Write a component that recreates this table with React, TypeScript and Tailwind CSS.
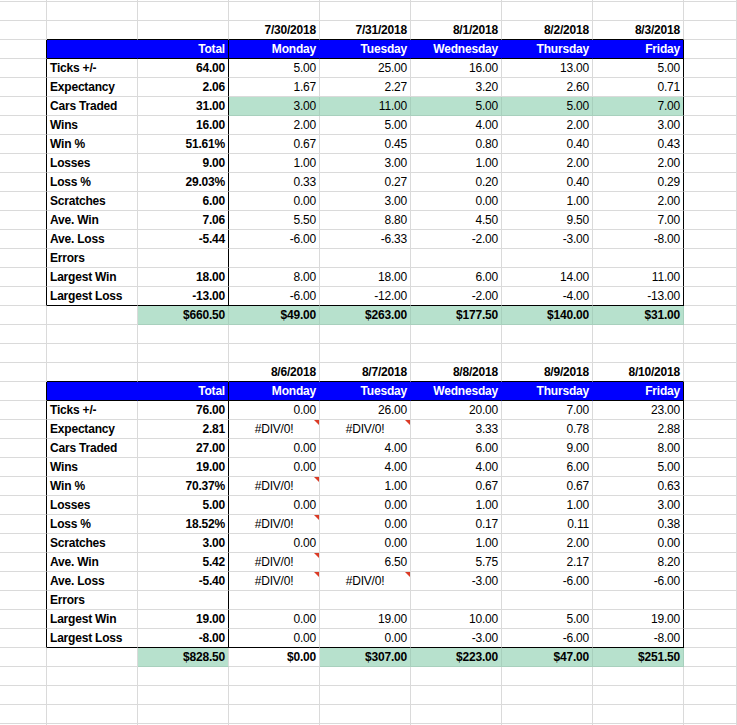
import React from "react";

type Line = "gray" | "black" | "blue" | "green";
type Fill = "none" | "blue" | "green";

const rightLine: Record<Line, string> = {
  gray: "border-r-[#dadada]",
  black: "border-r-black",
  blue: "border-r-[#0000ff]",
  green: "border-r-[#a8d0bd]",
};

const bottomLine: Record<Line, string> = {
  gray: "border-b-[#dadada]",
  black: "border-b-black",
  blue: "border-b-[#0000ff]",
  green: "border-b-[#a8d0bd]",
};

const fills: Record<Fill, string> = {
  none: "bg-white text-black",
  blue: "bg-[#0000ff] text-white",
  green: "bg-[#b7e1cd] text-black",
};

type CellProps = {
  text?: string;
  align?: "left" | "right" | "center";
  bold?: boolean;
  fill?: Fill;
  r?: Line;
  b?: Line;
  error?: boolean;
};

function Cell({
  text = "",
  align = "right",
  bold = false,
  fill = "none",
  r = "gray",
  b = "gray",
  error = false,
}: CellProps) {
  const alignCls =
    align === "left" ? "text-left" : align === "center" ? "text-center" : "text-right";
  return (
    <div
      className={`relative box-border h-full overflow-hidden whitespace-nowrap border-r border-b px-[3px] text-[12px] leading-[19px] tracking-[-0.2px] ${alignCls} ${
        bold ? "font-bold" : "font-normal"
      } ${fills[fill]} ${rightLine[r]} ${bottomLine[b]}`}
    >
      {text}
      {error && (
        <span className="absolute top-0 right-0 h-0 w-0 border-t-[5px] border-l-[5px] border-t-[#db3b26] border-l-transparent" />
      )}
    </div>
  );
}

type StatRow = { label: string; total: string; days: string[] };

type Block = {
  dates: string[];
  rows: StatRow[];
  totals: string[];
  totalsGreen: boolean[];
  carsGreen: boolean;
};

const dayNames = ["Monday", "Tuesday", "Wednesday", "Thursday", "Friday"];

const week1: Block = {
  dates: ["7/30/2018", "7/31/2018", "8/1/2018", "8/2/2018", "8/3/2018"],
  rows: [
    { label: "Ticks +/-", total: "64.00", days: ["5.00", "25.00", "16.00", "13.00", "5.00"] },
    { label: "Expectancy", total: "2.06", days: ["1.67", "2.27", "3.20", "2.60", "0.71"] },
    { label: "Cars Traded", total: "31.00", days: ["3.00", "11.00", "5.00", "5.00", "7.00"] },
    { label: "Wins", total: "16.00", days: ["2.00", "5.00", "4.00", "2.00", "3.00"] },
    { label: "Win %", total: "51.61%", days: ["0.67", "0.45", "0.80", "0.40", "0.43"] },
    { label: "Losses", total: "9.00", days: ["1.00", "3.00", "1.00", "2.00", "2.00"] },
    { label: "Loss %", total: "29.03%", days: ["0.33", "0.27", "0.20", "0.40", "0.29"] },
    { label: "Scratches", total: "6.00", days: ["0.00", "3.00", "0.00", "1.00", "2.00"] },
    { label: "Ave. Win", total: "7.06", days: ["5.50", "8.80", "4.50", "9.50", "7.00"] },
    { label: "Ave. Loss", total: "-5.44", days: ["-6.00", "-6.33", "-2.00", "-3.00", "-8.00"] },
    { label: "Errors", total: "", days: ["", "", "", "", ""] },
    { label: "Largest Win", total: "18.00", days: ["8.00", "18.00", "6.00", "14.00", "11.00"] },
    { label: "Largest Loss", total: "-13.00", days: ["-6.00", "-12.00", "-2.00", "-4.00", "-13.00"] },
  ],
  totals: ["$660.50", "$49.00", "$263.00", "$177.50", "$140.00", "$31.00"],
  totalsGreen: [true, true, true, true, true, true],
  carsGreen: true,
};

const week2: Block = {
  dates: ["8/6/2018", "8/7/2018", "8/8/2018", "8/9/2018", "8/10/2018"],
  rows: [
    { label: "Ticks +/-", total: "76.00", days: ["0.00", "26.00", "20.00", "7.00", "23.00"] },
    { label: "Expectancy", total: "2.81", days: ["#DIV/0!", "#DIV/0!", "3.33", "0.78", "2.88"] },
    { label: "Cars Traded", total: "27.00", days: ["0.00", "4.00", "6.00", "9.00", "8.00"] },
    { label: "Wins", total: "19.00", days: ["0.00", "4.00", "4.00", "6.00", "5.00"] },
    { label: "Win %", total: "70.37%", days: ["#DIV/0!", "1.00", "0.67", "0.67", "0.63"] },
    { label: "Losses", total: "5.00", days: ["0.00", "0.00", "1.00", "1.00", "3.00"] },
    { label: "Loss %", total: "18.52%", days: ["#DIV/0!", "0.00", "0.17", "0.11", "0.38"] },
    { label: "Scratches", total: "3.00", days: ["0.00", "0.00", "1.00", "2.00", "0.00"] },
    { label: "Ave. Win", total: "5.42", days: ["#DIV/0!", "6.50", "5.75", "2.17", "8.20"] },
    { label: "Ave. Loss", total: "-5.40", days: ["#DIV/0!", "#DIV/0!", "-3.00", "-6.00", "-6.00"] },
    { label: "Errors", total: "", days: ["", "", "", "", ""] },
    { label: "Largest Win", total: "19.00", days: ["0.00", "19.00", "10.00", "5.00", "19.00"] },
    { label: "Largest Loss", total: "-8.00", days: ["0.00", "0.00", "-3.00", "-6.00", "-8.00"] },
  ],
  totals: ["$828.50", "$0.00", "$307.00", "$223.00", "$47.00", "$251.50"],
  totalsGreen: [true, false, true, true, true, true],
  carsGreen: false,
};

function BlankRow({ rowKey }: { rowKey: string }) {
  return (
    <>
      {Array.from({ length: 9 }).map((_, i) => (
        <Cell key={`${rowKey}-${i}`} />
      ))}
    </>
  );
}

function WeekBlock({ block, id }: { block: Block; id: string }) {
  const last = block.rows.length - 1;
  return (
    <>
      {/* dates */}
      <Cell />
      <Cell b="black" />
      <Cell b="black" />
      {block.dates.map((d) => (
        <Cell key={`${id}-d-${d}`} text={d} bold b="black" />
      ))}
      <Cell />

      {/* blue header */}
      <Cell r="black" />
      <Cell fill="blue" r="blue" b="black" />
      <Cell fill="blue" text="Total" bold r="black" b="black" />
      {dayNames.map((n, i) => (
        <Cell key={`${id}-h-${n}`} fill="blue" text={n} bold r={i === 4 ? "black" : "blue"} b="black" />
      ))}
      <Cell />

      {/* stats */}
      {block.rows.map((row, ri) => {
        const green = block.carsGreen && row.label === "Cars Traded";
        const bLine: Line = ri === last ? "black" : "gray";
        return (
          <React.Fragment key={`${id}-r-${row.label}`}>
            <Cell r="black" />
            <Cell text={row.label} align="left" bold b={bLine} />
            <Cell text={row.total} bold r="black" b={bLine} />
            {row.days.map((v, di) => {
              const err = v === "#DIV/0!";
              return (
                <Cell
                  key={`${id}-r-${row.label}-${di}`}
                  text={v}
                  align={err ? "center" : "right"}
                  error={err}
                  fill={green ? "green" : "none"}
                  r={di === 4 ? "black" : green ? "green" : "gray"}
                  b={ri === last ? "black" : green ? "green" : "gray"}
                />
              );
            })}
            <Cell />
          </React.Fragment>
        );
      })}

      {/* totals */}
      <Cell />
      <Cell />
      {block.totals.map((t, ti) => {
        const green = block.totalsGreen[ti];
        const nextGreen = ti < 5 && block.totalsGreen[ti + 1];
        return (
          <Cell
            key={`${id}-t-${ti}`}
            text={t}
            bold
            fill={green ? "green" : "none"}
            r={green && (nextGreen || ti === 5) ? "green" : "gray"}
            b={green ? "green" : "gray"}
          />
        );
      })}
      <Cell />
    </>
  );
}

export default function App() {
  return (
    <div
      className="h-[725px] w-full overflow-hidden bg-white"
      style={{ fontFamily: '"Liberation Sans", Arial, sans-serif' }}
    >
      <div className="grid grid-cols-[47px_91px_91px_91px_91px_91px_91px_91px_1fr] auto-rows-[19px] [grid-template-rows:2px]">
        <BlankRow rowKey="top" />
        <BlankRow rowKey="r1" />
        <WeekBlock block={week1} id="w1" />
        <BlankRow rowKey="g1" />
        <BlankRow rowKey="g2" />
        <WeekBlock block={week2} id="w2" />
        <BlankRow rowKey="e1" />
        <BlankRow rowKey="e2" />
        <BlankRow rowKey="e3" />
        <BlankRow rowKey="e4" />
      </div>
    </div>
  );
}
